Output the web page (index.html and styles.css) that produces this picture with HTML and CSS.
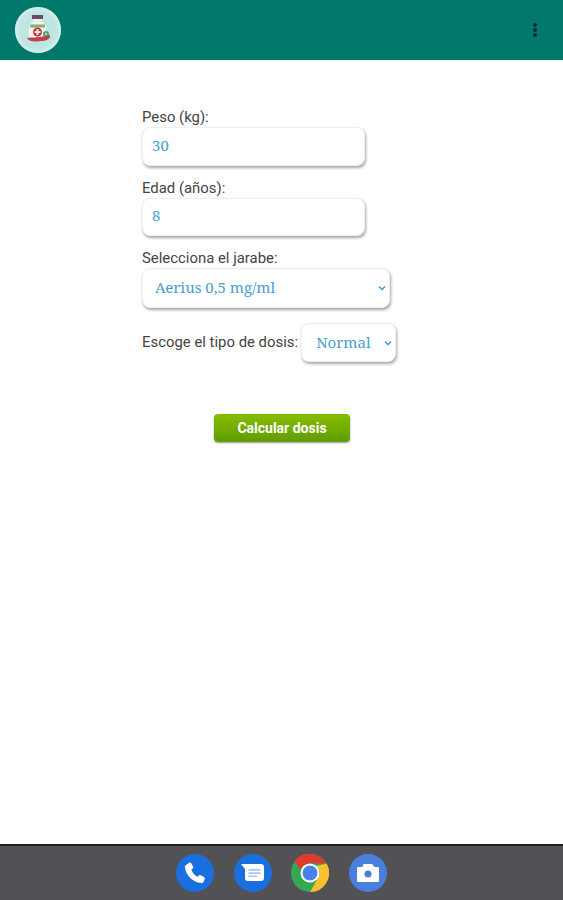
FILE: index.html
```html
<html lang="es">
<head>
  <meta charset="UTF-8" />
  <meta name="viewport" content="width=device-width, initial-scale=1.0"/>
  <title>Calculadora de dosis</title>
  <link rel="stylesheet" href="styles.css">
</head>
<body>

<!-- Barra superior -->
<div class="topbar">
  <div class="logo">
    <svg width="30" height="32" viewBox="0 0 30 32">
      <rect x="9" y="1" width="11" height="4" fill="#6b4a68"/>
      <rect x="10" y="5" width="9" height="3" fill="#e8efe6"/>
      <path d="M9 8h11l3 4v13H6V12z" fill="#f2f4ee"/>
      <path d="M7 10.500h15v3H7z" fill="#7fb377"/>
      <circle cx="14.500" cy="18" r="4.500" fill="#c8323a"/>
      <path d="M13.500 15h2v2h2v2h-2v2h-2v-2h-2v-2h2z" fill="#f6e9e4"/>
      <circle cx="23" cy="20" r="3" fill="#4f9e68"/>
      <circle cx="23" cy="20" r="1" fill="#dff0e0"/>
      <path d="M4 24c6-1 12 0 23-3 1 4-4 6-9 6-5 1-12 1-14-3z" fill="#b9454a"/>
    </svg>
  </div>
  <svg class="menu-dots" width="6" height="16" viewBox="0 0 6 16">
    <circle cx="3" cy="3" r="1.900"/>
    <circle cx="3" cy="8" r="1.900"/>
    <circle cx="3" cy="13" r="1.900"/>
  </svg>
</div>

<!-- Formulario -->
<div class="main-content">
  <label class="field-label" for="peso">Peso (kg):</label>
  <input class="box input-box" id="peso" type="text" value="30" />

  <label class="field-label" for="edad">Edad (años):</label>
  <input class="box input-box" id="edad" type="text" value="8" />

  <label class="field-label" for="jarabe">Selecciona el jarabe:</label>
  <div class="select-wrap">
    <select class="box jarabe" id="jarabe">
      <option>Aerius 0,5 mg/ml</option>
    </select>
    <svg class="chevron" width="8" height="6" viewBox="0 0 8 6"><path d="M1 1.500l3 3 3-3"/></svg>
  </div>

  <div class="dosis-row">
    <label class="field-label" for="dosis">Escoge el tipo de dosis:</label>
    <div class="select-wrap">
      <select class="box dosis" id="dosis">
        <option>Normal</option>
      </select>
      <svg class="chevron" width="8" height="6" viewBox="0 0 8 6"><path d="M1 1.500l3 3 3-3"/></svg>
    </div>
  </div>

  <div class="btn-row">
    <button class="calc-btn">Calcular dosis</button>
  </div>
</div>

<!-- Barra de apps -->
<div class="dock">
  <div class="app app-blue">
    <svg width="26" height="26" viewBox="0 0 24 24">
      <path fill="#fff" d="M6.600 2.600c.7-.4 1.500-.2 1.900.5l1.700 3c.3.600.2 1.300-.3 1.700L8.600 9c.9 2.700 2.800 5 5.700 6.500l1.300-1.200c.5-.4 1.200-.5 1.700-.2l3 1.700c.7.400.9 1.200.6 1.900l-1 2.300c-.4.900-1.300 1.400-2.300 1.200C9.500 20.600 3.600 14 2.700 6.700c-.1-1 .4-1.900 1.300-2.400z"/>
    </svg>
  </div>
  <div class="app app-blue">
    <svg width="26" height="24" viewBox="0 0 26 24">
      <path fill="#fff" d="M1 3h20c2 0 3 1 3 3v11c0 2-1 3-3 3H8c-2 0-3-1-3-3V8z"/>
      <path fill="#a9c6f5" d="M8.500 8h12v1.700h-12zM8.500 11.200h12v1.700h-12zM8.500 14.400h8.500v1.700H8.500z"/>
    </svg>
  </div>
  <div class="app">
    <svg width="38" height="38" viewBox="0 0 38 38">
      <circle cx="19" cy="19" r="19" fill="#34a853"/>
      <path fill="#e0392e" d="M19 0a19 19 0 0 1 16.500 9.500H19a9.500 9.500 0 0 0-9 6.500L3 7a19 19 0 0 1 16-7z"/>
      <path fill="#fbc02d" d="M35.500 9.500A19 19 0 0 1 19 38l8.200-14.200A9.500 9.500 0 0 0 25.500 12z" />
      <circle cx="19" cy="19" r="9.500" fill="#fff"/>
      <circle cx="19" cy="19" r="7.500" fill="#4a80ee"/>
    </svg>
  </div>
  <div class="app app-cam">
    <svg width="26" height="24" viewBox="0 0 26 24">
      <path fill="#fff" d="M9 3h7.500c.6 0 1 .2 1.300.7L19.500 6H23c.6 0 1 .4 1 1v13c0 .6-.4 1-1 1H3c-.6 0-1-.4-1-1V7c0-.6.4-1 1-1h4.500l.7-2.300c.1-.4.400-.7.800-.7z"/>
      <circle cx="13" cy="13" r="3.500" fill="#4a7fe0"/>
    </svg>
  </div>
</div>

</body>
</html>
```

FILE: styles.css
```css
/* Styles de base */
body {
  margin: 0;
  height: 100vh;
  display: flex;
  flex-direction: column;
  background: #fff;
  font-family: 'Roboto', 'Liberation Sans', sans-serif;
  color: #444;
}
.topbar {
  height: 60px;
  flex-shrink: 0;
  background: #00796a;
  display: flex;
  align-items: center;
  justify-content: space-between;
  padding: 0 25px 0 15px;
}
.logo {
  width: 46px;
  height: 46px;
  border-radius: 50%;
  background: #bfe6e3;
  box-shadow: inset 0 0 4px 1px #e6f5f3;
  display: flex;
  align-items: center;
  justify-content: center;
}
.menu-dots {
  fill: #0a2a30;
}
.main-content {
  flex: 1;
  padding: 48px 0 0 142px;
  display: flex;
  flex-direction: column;
  align-items: flex-start;
}
.field-label {
  font-size: 14.9px;
  line-height: 19px;
}
.box {
  display: block;
  box-sizing: border-box;
  border: 1px solid #efefef;
  border-radius: 8px;
  background: #fff;
  box-shadow: 1px 2px 3px rgba(0, 0, 0, 0.35);
  font-family: 'Noto Serif', 'DejaVu Serif', 'Liberation Serif', serif;
  font-size: 15px;
  color: #4a9fd0;
  outline: none;
  appearance: none;
}
.input-box {
  width: 223px;
  height: 38.5px;
  margin-bottom: 13px;
  padding: 0 9px 3px;
}
.select-wrap {
  position: relative;
}
.jarabe {
  width: 248px;
  height: 40px;
  padding: 0 12px 2px;
}
.dosis-row {
  display: flex;
  align-items: center;
  gap: 3px;
  margin-top: 15px;
}
.dosis {
  width: 95px;
  height: 39px;
  padding: 0 14px 2px;
}
.chevron {
  position: absolute;
  top: 17px;
  right: 4px;
  fill: none;
  stroke: #4a9fd0;
  stroke-width: 1.6;
}
.btn-row {
  width: 280px;
  margin-top: 52px;
  display: flex;
  justify-content: center;
}
.calc-btn {
  width: 136px;
  height: 28px;
  border: none;
  border-radius: 4px;
  background: linear-gradient(#86bd00, #5f9c00);
  box-shadow: 0 1px 2px rgba(0, 0, 0, 0.4);
  color: #fff;
  font-family: 'Roboto', 'Liberation Sans', sans-serif;
  font-size: 14px;
  font-weight: 700;
}
.dock {
  height: 56px;
  flex-shrink: 0;
  box-sizing: border-box;
  border-top: 2px solid #222;
  background: #525256;
  display: flex;
  justify-content: center;
  align-items: center;
  gap: 19.5px;
}
.app {
  width: 38px;
  height: 38px;
  border-radius: 50%;
  display: flex;
  align-items: center;
  justify-content: center;
}
.app-blue {
  background: #1a6fe0;
}
.app-cam {
  background: #4a7fe0;
}
```
